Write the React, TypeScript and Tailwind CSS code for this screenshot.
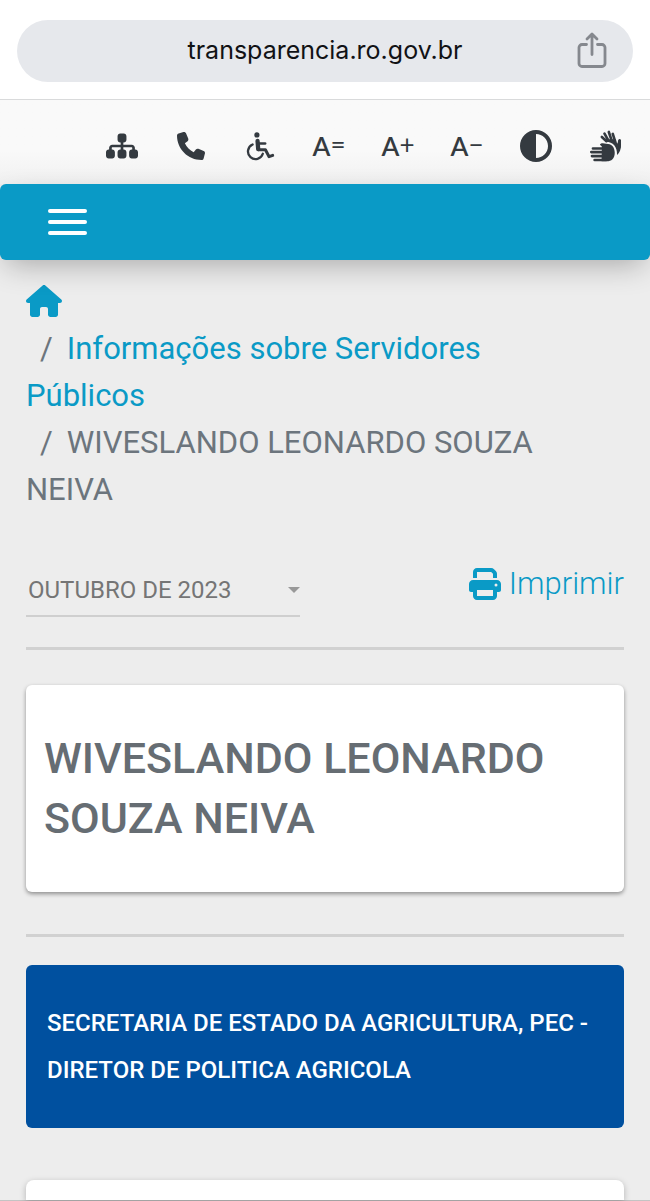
import { useState } from 'react';
import type { ReactNode } from 'react';
import {
  FaCircleHalfStroke,
  FaHouse,
  FaPhone,
  FaPrint,
  FaSitemap,
} from 'react-icons/fa6';

interface Tool { label: string; icon: ReactNode; }

function FontSizeIcon({ sign }: { sign: string }) {
  return (
    <span className="flex items-center font-['Lato',sans-serif] leading-8">
      <span className="text-[26px] font-semibold">A</span>
      <span className="pb-1 text-[26px]">{sign}</span>
    </span>
  );
}

function WheelchairIcon() {
  return (
    <svg viewBox="0 0 86 88" className="size-[29px] shrink-0" fill="none" stroke="currentColor" strokeWidth="8" strokeLinecap="round" strokeLinejoin="round">
      <circle cx="32" cy="9" r="8" fill="currentColor" stroke="none" />
      <path d="M34 27L36 52" strokeWidth="13" />
      <path d="M36 35H57" />
      <path d="M36 54H58L69 75L80 71" strokeWidth="9" />
      <path d="M19 38A23 23 0 1 0 50 66" strokeWidth="7" />
    </svg>
  );
}

function HandsIcon() {
  return (
    <svg viewBox="0 0 96 100" className="size-[33px] shrink-0" fill="currentColor" stroke="currentColor" strokeLinecap="round">
      <path stroke="none" d="M37 50L31 45C34 39 42 40 50 42C66 42 76 52 76 69C76 87 66 95 52 95H36z" />
      <path fill="none" strokeWidth="8" d="M10 56H40M5 67H40M7 79H40M15 91H50" />
      <path stroke="none" d="M47 34L54 28L78 28L84 42L87 30H94C97 50 94 66 83 76C84 50 70 35 47 36z" />
      <path fill="none" strokeWidth="8" d="M37 21L51 34M45 11L57 32M58 6L66 30M70 12L77 34M91 31L90 52" />
    </svg>
  );
}

const TOOLS: Tool[] = [
  { label: 'Mapa do site', icon: <FaSitemap className="size-8" /> },
  { label: 'Contato', icon: <FaPhone className="size-7" /> },
  { label: 'Acessibilidade', icon: <WheelchairIcon /> },
  { label: 'Fonte normal', icon: <FontSizeIcon sign="=" /> },
  { label: 'Aumentar fonte', icon: <FontSizeIcon sign="+" /> },
  { label: 'Diminuir fonte', icon: <FontSizeIcon sign="−" /> },
  { label: 'Alto contraste', icon: <FaCircleHalfStroke className="size-8" /> },
  { label: 'Libras', icon: <HandsIcon /> },
];

function AddressBar() {
  return (
    <header className="h-[100px] shrink-0 px-[17px] pt-5 bg-white border-b border-[#d9dadb]">
      <div className="relative flex items-center justify-center h-[62px] pb-0.5 rounded-full bg-[#e6e8ec]">
        <span className="font-['Inter',sans-serif] text-[25px] leading-8 text-[#111215]">transparencia.ro.gov.br</span>
        <button type="button" aria-label="Compartilhar" className="absolute right-[25px] text-[#85888e]">
          <svg viewBox="0 0 32 38" className="w-8 h-[38px]" fill="none" stroke="currentColor" strokeWidth="2.8" strokeLinecap="round" strokeLinejoin="round">
            <path d="M10.5 13.5H6a3 3 0 0 0-3 3V32.500a3 3 0 0 0 3 3h20a3 3 0 0 0 3-3V16.500a3 3 0 0 0-3-3h-4.500" />
            <path d="M16 23.500V3.500M11 8L16 3l5 5" />
          </svg>
        </button>
      </div>
    </header>
  );
}

function AccessibilityBar() {
  return (
    <div className="flex items-center justify-end gap-[37px] h-[84px] shrink-0 pb-1 pt-3 pr-[29px] bg-linear-to-b from-[#f9f9f9] from-60% to-[#f1f1f1] text-[#343a40]">
      {TOOLS.map((tool) => (
        <button key={tool.label} type="button" aria-label={tool.label} title={tool.label} className="flex items-center justify-center w-8 h-10">
          {tool.icon}
        </button>
      ))}
    </div>
  );
}

function NavBar() {
  return (
    <nav className="relative flex items-center h-[76px] shrink-0 px-12 rounded-md bg-[#0a9ac6] shadow-[0_10px_30px_-6px_rgba(0,0,0,0.3)]">
      <button type="button" aria-label="Abrir menu" className="flex flex-col gap-[7px] w-[39px]">
        <span className="h-[4px] w-full rounded-xs bg-white" />
        <span className="h-[4px] w-full rounded-xs bg-white" />
        <span className="h-[4px] w-full rounded-xs bg-white" />
      </button>
    </nav>
  );
}

function Breadcrumb() {
  return (
    <nav aria-label="Breadcrumb" className="pr-6 text-[31px] leading-[47px] text-[#6c757d]">
      <ol>
        <li className="pb-2">
          <a href="#" aria-label="Início" className="block w-9 text-[#0a9ac6]">
            <FaHouse className="w-9 h-8" />
          </a>
        </li>
        <li>
          <span className="px-[14px]">/</span>
          <a href="#" className="text-[#0a9ac6]">Informações sobre Servidores Públicos</a>
        </li>
        <li aria-current="page">
          <span className="px-[14px]">/</span>
          WIVESLANDO LEONARDO SOUZA NEIVA
        </li>
      </ol>
    </nav>
  );
}

function PeriodRow() {
  const [period, setPeriod] = useState('2023-10');

  return (
    <div className="flex items-start justify-between pt-[50px]">
      <div className="relative w-[274px]">
        <select
          aria-label="Período"
          value={period}
          onChange={(e) => setPeriod(e.target.value)}
          className="block w-full h-[54px] pt-0.5 pl-0.5 pr-8 appearance-none border-b-2 border-[#cfcfcf] bg-transparent text-2xl text-[#757575]"
        >
          <option value="2023-10">OUTUBRO DE 2023</option>
        </select>
        <span className="absolute right-0 top-6 border-x-6 border-t-6 border-x-transparent border-t-[#999999] pointer-events-none" />
      </div>
      <button type="button" className="flex items-center gap-2 h-[42px] text-[31px] leading-10 font-light text-[#0a9ac6]">
        <FaPrint className="size-8" />
        Imprimir
      </button>
    </div>
  );
}

export default function App() {
  return (
    <div className="flex flex-col min-h-screen border-b border-[#c4c4c4] bg-[#ededed] font-['Roboto',sans-serif]">
      <AddressBar />
      <AccessibilityBar />
      <NavBar />
      <main className="flex flex-col grow px-[26px] pt-[25px]">
        <Breadcrumb />
        <PeriodRow />
        <hr className="mt-[30px] border-t-3 border-[#d1d1d1]" />
        <section className="mt-[35px] px-[18px] pt-[43px] pb-11 rounded-md bg-white shadow-[0_2px_4px_rgba(0,0,0,0.4)]">
          <h1 className="text-[43px] leading-[60px] font-medium text-[#666d73]">WIVESLANDO LEONARDO SOUZA NEIVA</h1>
        </section>
        <hr className="mt-[42px] border-t-3 border-[#d1d1d1]" />
        <section className="mt-7 px-[21px] pt-[35px] pb-[34px] rounded-md bg-[#00509f]">
          <h2 className="text-2xl leading-[47px] font-medium text-white">
            SECRETARIA DE ESTADO DA AGRICULTURA, PEC - DIRETOR DE POLITICA AGRICOLA
          </h2>
        </section>
        <section className="grow mt-[52px] rounded-t-lg bg-white shadow-[0_2px_6px_rgba(0,0,0,0.25)]" />
      </main>
    </div>
  );
}
